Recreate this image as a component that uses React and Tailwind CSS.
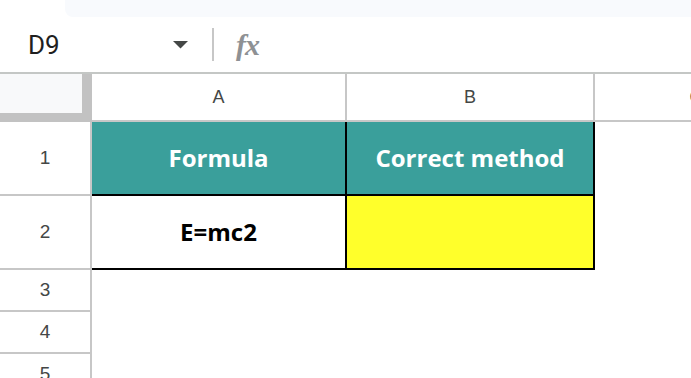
export default function App() {
  const teal = 'bg-[#3a9f9b]'
  return (
    <div className="w-[691px] h-[378px] overflow-hidden bg-white" style={{ fontFamily: 'Roboto, Arial, sans-serif' }}>
      {/* toolbar remnant */}
      <div className="flex h-[17px]">
        <div className="w-[65px] bg-white" />
        <div className="flex-1 bg-[#f8fafd] rounded-bl-lg" />
      </div>

      {/* name box + formula bar */}
      <div className="flex items-center h-[57px] border-b-2 border-[#c4c7c5]">
        <div className="w-[212px] flex items-center pl-[28px] pr-[24px]">
          <span className="text-[26px] text-[#1f1f1f] flex-1 font-['Roboto'] leading-none">D9</span>
          <svg width="15" height="8" viewBox="0 0 15 8">
            <path d="M0 0 H15 L7.5 7.5 Z" fill="#444746" />
          </svg>
        </div>
        <div className="w-[2px] h-[33px] bg-[#c7c7c7]" />
        <span className="ml-[22px] text-[30px] italic font-semibold text-[#8e9194] font-['Liberation_Serif'] tracking-[-1px] leading-none">fx</span>
      </div>

      {/* grid */}
      <div className="grid grid-cols-[92px_255px_248px_202px] grid-rows-[48px_74px_74px_42px_42px_42px] text-[#444746]">
        {/* header row */}
        <div className="bg-[#f8f9fa] border-r-[10px] border-b-[9px] border-[#c2c2c2]" />
        <div className="flex items-center justify-center border-r-2 border-b-2 border-[#c7c7c7] text-[18px] font-['Liberation_Sans']">A</div>
        <div className="flex items-center justify-center border-r-2 border-b-2 border-[#c7c7c7] text-[18px] font-['Liberation_Sans']">B</div>
        <div className="flex items-center justify-center border-b-2 border-[#c7c7c7] text-[18px] font-['Liberation_Sans']">C</div>

        {/* row 1 */}
        <div className="flex items-center justify-center border-r-2 border-b-2 border-[#c7c7c7] text-[19px] font-['Liberation_Sans']">1</div>
        <div className={`${teal} flex items-center justify-center border-r-2 border-b-2 border-black text-white font-bold text-[24px] font-['Open_Sans']`}>Formula</div>
        <div className={`${teal} flex items-center justify-center border-r-2 border-b-2 border-black text-white font-bold text-[24px] font-['Open_Sans']`}>Correct method</div>
        <div />

        {/* row 2 */}
        <div className="flex items-center justify-center border-r-2 border-b-2 border-[#c7c7c7] text-[19px] font-['Liberation_Sans']">2</div>
        <div className="flex items-center justify-center border-r-2 border-b-2 border-black text-black font-bold text-[24px] font-['Open_Sans']">E=mc2</div>
        <div className="bg-[#ffff2b] border-r-2 border-b-2 border-black" />
        <div />

        {/* rows 3-5 */}
        {[3, 4, 5].map((n) => (
          <div key={n} className="contents">
            <div className="flex items-center justify-center border-r-2 border-b-2 border-[#c7c7c7] text-[19px] font-['Liberation_Sans']">{n}</div>
            <div />
            <div />
            <div />
          </div>
        ))}
      </div>
    </div>
  )
}
